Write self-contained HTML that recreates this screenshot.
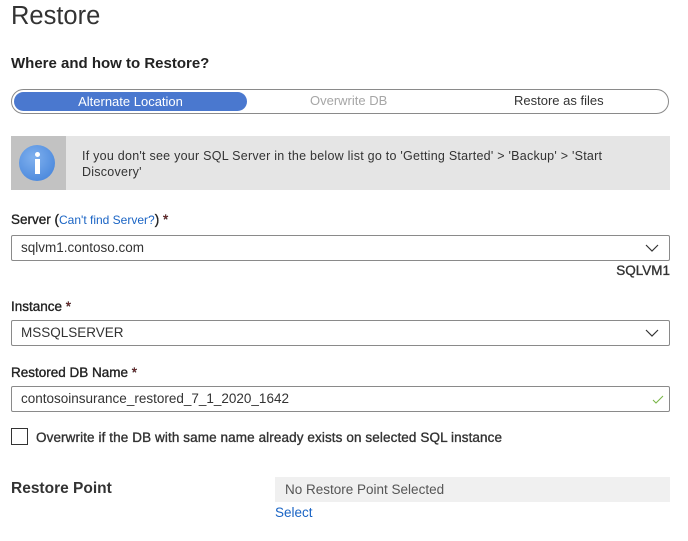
<!DOCTYPE html>
<html><head><style>
body{margin:0;width:688px;height:541px;background:#fff;font-family:"Liberation Sans",sans-serif;color:#222;position:relative;overflow:hidden}
.a{position:absolute;white-space:nowrap}
.inp{position:absolute;left:11px;width:657px;height:24px;border:1px solid #8a8a8a;border-radius:2px;font-size:13.5px;line-height:24px;box-sizing:content-box;color:#333}
.inp span{position:absolute;left:9px}
.lab{font-size:13.5px;color:#222;-webkit-text-stroke:0.35px #222}
.req{color:#a4262c}
</style></head><body>
<div class="a" style="left:11px;top:2px;font-size:25.5px;color:#333">Restore</div>
<div class="a" style="left:11px;top:55px;font-size:15px;font-weight:bold">Where and how to Restore?</div>
<div class="a" style="left:11px;top:89px;width:656px;height:23px;border:1px solid #8a8a8a;border-radius:13px"></div>
<div class="a" style="left:14px;top:92px;width:233px;height:19px;background:#4a78cf;border-radius:10px;color:#fff;font-size:13px;line-height:19px;text-align:center">Alternate Location</div>
<div class="a" style="left:310px;top:93px;font-size:13px;color:#a6a6a6">Overwrite DB</div>
<div class="a" style="left:514px;top:93px;font-size:13px;color:#333">Restore as files</div>
<div class="a" style="left:11px;top:136px;width:659px;height:54px;background:#e5e5e5"></div>
<div class="a" style="left:11px;top:136px;width:55px;height:54px;background:#c2c2c2"></div>
<div class="a" style="left:19px;top:145px;width:36px;height:36px;border-radius:50%;background:radial-gradient(circle at 40% 35%,#7fb0ee,#3f7fd8)"></div>
<div class="a" style="left:35px;top:152px;width:5px;height:5px;border-radius:50%;background:#fff"></div>
<div class="a" style="left:35px;top:159px;width:5px;height:15px;background:#fff"></div>
<div class="a" style="left:82px;top:148px;font-size:12.5px;letter-spacing:0.25px;color:#333;line-height:16px">If you don't see your SQL Server in the below list go to 'Getting Started' &gt; 'Backup' &gt; 'Start<br>Discovery'</div>
<div class="a lab" style="left:11px;top:212px">Server (<span style="color:#1a64c4;font-size:12px;-webkit-text-stroke:0">Can't find Server?</span>) <span class="req">*</span></div>
<div class="inp" style="top:235px"><span>sqlvm1.contoso.com</span>
<svg style="position:absolute;right:10px;top:8px" width="14" height="8"><path d="M1 1L7 7L13 1" stroke="#333" fill="none" stroke-width="1.2"/></svg></div>
<div class="a" style="right:18px;top:263px;font-size:13.5px;color:#333;-webkit-text-stroke:0.35px #333">SQLVM1</div>
<div class="a lab" style="left:11px;top:299px">Instance <span class="req">*</span></div>
<div class="inp" style="top:320px"><span>MSSQLSERVER</span>
<svg style="position:absolute;right:10px;top:8px" width="14" height="8"><path d="M1 1L7 7L13 1" stroke="#333" fill="none" stroke-width="1.2"/></svg></div>
<div class="a lab" style="left:11px;top:365px">Restored DB Name <span class="req">*</span></div>
<div class="inp" style="top:386px"><span>contosoinsurance_restored_7_1_2020_1642</span>
<svg style="position:absolute;right:5px;top:8px" width="12" height="9"><path d="M1 5L4 8L11 1" stroke="#7ab648" fill="none" stroke-width="1.1"/></svg></div>
<div class="a" style="left:11px;top:428px;width:17px;height:17px;border:1px solid #333;box-sizing:border-box"></div>
<div class="a" style="left:36px;top:430px;font-size:13.5px;letter-spacing:0.1px;color:#333;-webkit-text-stroke:0.35px #333">Overwrite if the DB with same name already exists on selected SQL instance</div>
<div class="a" style="left:11px;top:480px;font-size:15.5px;font-weight:bold;color:#333">Restore Point</div>
<div class="a" style="left:275px;top:477px;width:395px;height:25px;background:#f0f0f0;font-size:13.5px;line-height:26px;color:#555"><span style="margin-left:10px">No Restore Point Selected</span></div>
<div class="a" style="left:275px;top:505px;font-size:13.5px;color:#1a64c4">Select</div>
</body></html>
